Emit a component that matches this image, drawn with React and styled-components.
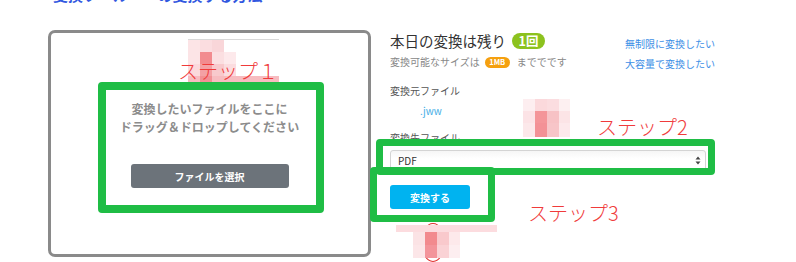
import React from 'react';
import styled, { createGlobalStyle } from 'styled-components';

const GlobalStyle = createGlobalStyle`
  html, body {
    margin: 0;
    padding: 0;
    background: #fff;
  }
  body {
    font-family: "Noto Sans CJK JP", "Noto Sans", sans-serif;
    overflow: hidden;
  }
`;

const Stage = styled.div`
  position: relative;
  width: 796px;
  height: 262px;
  overflow: hidden;
`;

const PageTitle = styled.h2`
  margin: -14px 0 0 53px;
  font-size: 15px;
  line-height: 18px;
  font-weight: bold;
  color: #3157e0;
  word-spacing: 26px;
`;

const Main = styled.div`
  display: flex;
  align-items: flex-start;
  margin-top: 26px;
  padding-left: 48px;
`;

const DropZone = styled.div`
  box-sizing: border-box;
  width: 323px;
  height: 227px;
  border: 3px solid #8a8a8a;
  border-radius: 7px;
  display: flex;
  flex-direction: column;
  align-items: center;
  padding-top: 67px;
`;

const DropText = styled.p`
  margin: 0;
  font-size: 12px;
  line-height: 18px;
  font-weight: bold;
  color: #8c8c8c;
  text-align: center;
`;

const Button = styled.button`
  box-sizing: border-box;
  width: ${(props) => props.width}px;
  height: 24px;
  margin-top: ${(props) => props.gap}px;
  border: none;
  border-radius: 3px;
  background: ${(props) => props.primary ? '#00b3f0' : '#6c737a'};
  color: #fff;
  font-family: inherit;
  font-size: 10px;
  font-weight: bold;
  padding: 0;
`;

const Panel = styled.div`
  width: 323px;
  margin-left: 19px;
  padding-top: 1px;
  display: flex;
  flex-direction: column;
`;

const HeaderRow = styled.div`
  display: flex;
  justify-content: space-between;
`;

const Title = styled.div`
  display: flex;
  align-items: center;
  font-size: 14.5px;
  line-height: 20px;
  color: #333;
`;

const Badge = styled.span`
  display: inline-flex;
  align-items: center;
  justify-content: center;
  width: ${(props) => props.w}px;
  height: ${(props) => props.h}px;
  border-radius: ${(props) => props.h / 2}px;
  background: ${(props) => props.color};
  color: #fff;
  font-weight: bold;
  font-size: ${(props) => props.size}px;
  margin: 0 ${(props) => props.mr}px 0 ${(props) => props.ml}px;
`;

const SizeLine = styled.div`
  display: flex;
  align-items: center;
  margin-top: 4px;
  font-size: 10px;
  line-height: 14px;
  color: #888;
`;

const Links = styled.div`
  display: flex;
  flex-direction: column;
  padding-top: 3px;
  width: 88px;
`;

const Link = styled.a`
  font-size: 10px;
  line-height: 19.5px;
  color: #3e8fe6;
  text-decoration: none;
  white-space: nowrap;
`;

const Label = styled.div`
  margin-top: ${(props) => props.gap}px;
  font-size: 10px;
  line-height: 14px;
  color: #555;
`;

const FileName = styled.div`
  margin-top: 6px;
  padding-left: 30px;
  font-size: 10px;
  line-height: 14px;
  color: #45aee6;
`;

const Select = styled.div`
  box-sizing: border-box;
  margin: 5px 7px 0 0;
  height: 21px;
  border: 1px solid #d4d4d4;
  border-radius: 3px;
  display: flex;
  align-items: center;
  justify-content: space-between;
  padding: 0 4px 0 7px;
  font-size: 10px;
  color: #333;
  background: linear-gradient(#f6f6f6, #fff 40%);
`;

/* annotation layer */
const Frame = styled.div`
  position: absolute;
  box-sizing: border-box;
  border: ${(props) => props.t}px solid #1fbd45;
  border-radius: 4px;
`;

const Step = styled.div`
  position: absolute;
  font-size: 20px;
  line-height: 24px;
  font-weight: 300;
  color: #f03b3b;
  white-space: nowrap;
`;

const Cell = styled.div`
  position: absolute;
`;

const Rule = styled.div`
  position: absolute;
  left: 188px;
  top: 39px;
  width: 91px;
  height: 1px;
  background: #d8d8d8;
`;

const Ring = styled.div`
  position: absolute;
  left: 421px;
  top: 223px;
  width: 22px;
  height: 37px;
  border: 1.5px solid #e0302f;
  border-radius: 50%;
`;

const mosaic = [
  [188, 40, 12, 12, '#fce4e6'], [200, 40, 12, 12, '#fbdde0'], [212, 40, 12, 12, '#f9d6d9'],
  [188, 52, 12, 12, '#fce4e6'], [200, 52, 12, 12, '#f28b8f'], [212, 52, 12, 12, '#fbdfe1'], [224, 52, 12, 12, '#fde9eb'],
  [188, 64, 12, 12, '#fbd9dc'], [200, 64, 12, 12, '#f4a0a4'], [212, 64, 12, 12, '#f8c9cc'], [224, 64, 12, 12, '#fbdcdf'],
  [188, 76, 91, 6, '#f7bcc0'], [200, 76, 12, 6, '#f29094'],

  [523, 99, 12, 12, '#fdeef0'], [535, 99, 12, 12, '#fbd9dc'], [547, 99, 12, 12, '#fbdde0'], [559, 99, 11, 12, '#fdf0f1'],
  [523, 111, 12, 12, '#fce3e6'], [535, 111, 12, 12, '#f49599'], [547, 111, 12, 12, '#f7c2c5'], [559, 111, 11, 12, '#fce4e6'],
  [523, 123, 12, 14, '#fce8ea'], [535, 123, 12, 14, '#f39196'], [547, 123, 12, 14, '#f7c5c8'], [559, 123, 11, 14, '#fde9eb'],

  [396, 225, 101, 7, '#fcdcdf'],
  [413, 232, 12, 13, '#fbe3e5'], [425, 232, 12, 13, '#f28a8e'], [437, 232, 12, 13, '#f9c9cc'], [449, 232, 11, 13, '#fde9eb'],
  [413, 245, 12, 13, '#fce6e8'], [425, 245, 12, 13, '#f3949a'], [437, 245, 12, 13, '#fad2d5'], [449, 245, 11, 13, '#fdeef0'],
];

function UpDown() {
  return (
    <svg width="6" height="9" viewBox="0 0 6 9">
      <path d="M3 0.5 L5.5 3.5 H0.5 Z M3 8.5 L5.5 5.5 H0.5 Z" fill="#444" />
    </svg>
  );
}

export default function App() {
  return (
    <Stage>
      <GlobalStyle />
      <PageTitle>変換ツール の変換する方法</PageTitle>
      <Main>
        <DropZone>
          <DropText>変換したいファイルをここに</DropText>
          <DropText>ドラッグ＆ドロップしてください</DropText>
          <Button width={158} gap={28}>ファイルを選択</Button>
        </DropZone>
        <Panel>
          <HeaderRow>
            <div>
              <Title>
                本日の変換は残り
                <Badge w={33} h={16} size={12.5} ml={6} mr={0} color="#8cc21e">1回</Badge>
              </Title>
              <SizeLine>
                変換可能なサイズは
                <Badge w={25} h={11} size={7.5} ml={5} mr={7} color="#f5a00f">1MB</Badge>
                まででです
              </SizeLine>
            </div>
            <Links>
              <Link>無制限に変換したい</Link>
              <Link>大容量で変換したい</Link>
            </Links>
          </HeaderRow>
          <Label gap={11}>変換元ファイル</Label>
          <FileName>.jww</FileName>
          <Label gap={13}>変換先ファイル</Label>
          <Select>
            PDF
            <UpDown />
          </Select>
          <Button primary width={80} gap={14}>変換する</Button>
        </Panel>
      </Main>

      <Ring />
      <Rule />
      {mosaic.map(([x, y, w, h, c], i) => (
        <Cell key={i} style={{ left: x, top: y, width: w, height: h, background: c }} />
      ))}
      <Step style={{ left: 178, top: 59 }}>ステップ１</Step>
      <Step style={{ left: 597, top: 115 }}>ステップ2</Step>
      <Step style={{ left: 528, top: 201 }}>ステップ3</Step>
      <Frame t={8} style={{ left: 98, top: 82, width: 226, height: 131 }} />
      <Frame t={7} style={{ left: 376, top: 139, width: 339, height: 36 }} />
      <Frame t={7} style={{ left: 370, top: 167, width: 125, height: 55 }} />
    </Stage>
  );
}
